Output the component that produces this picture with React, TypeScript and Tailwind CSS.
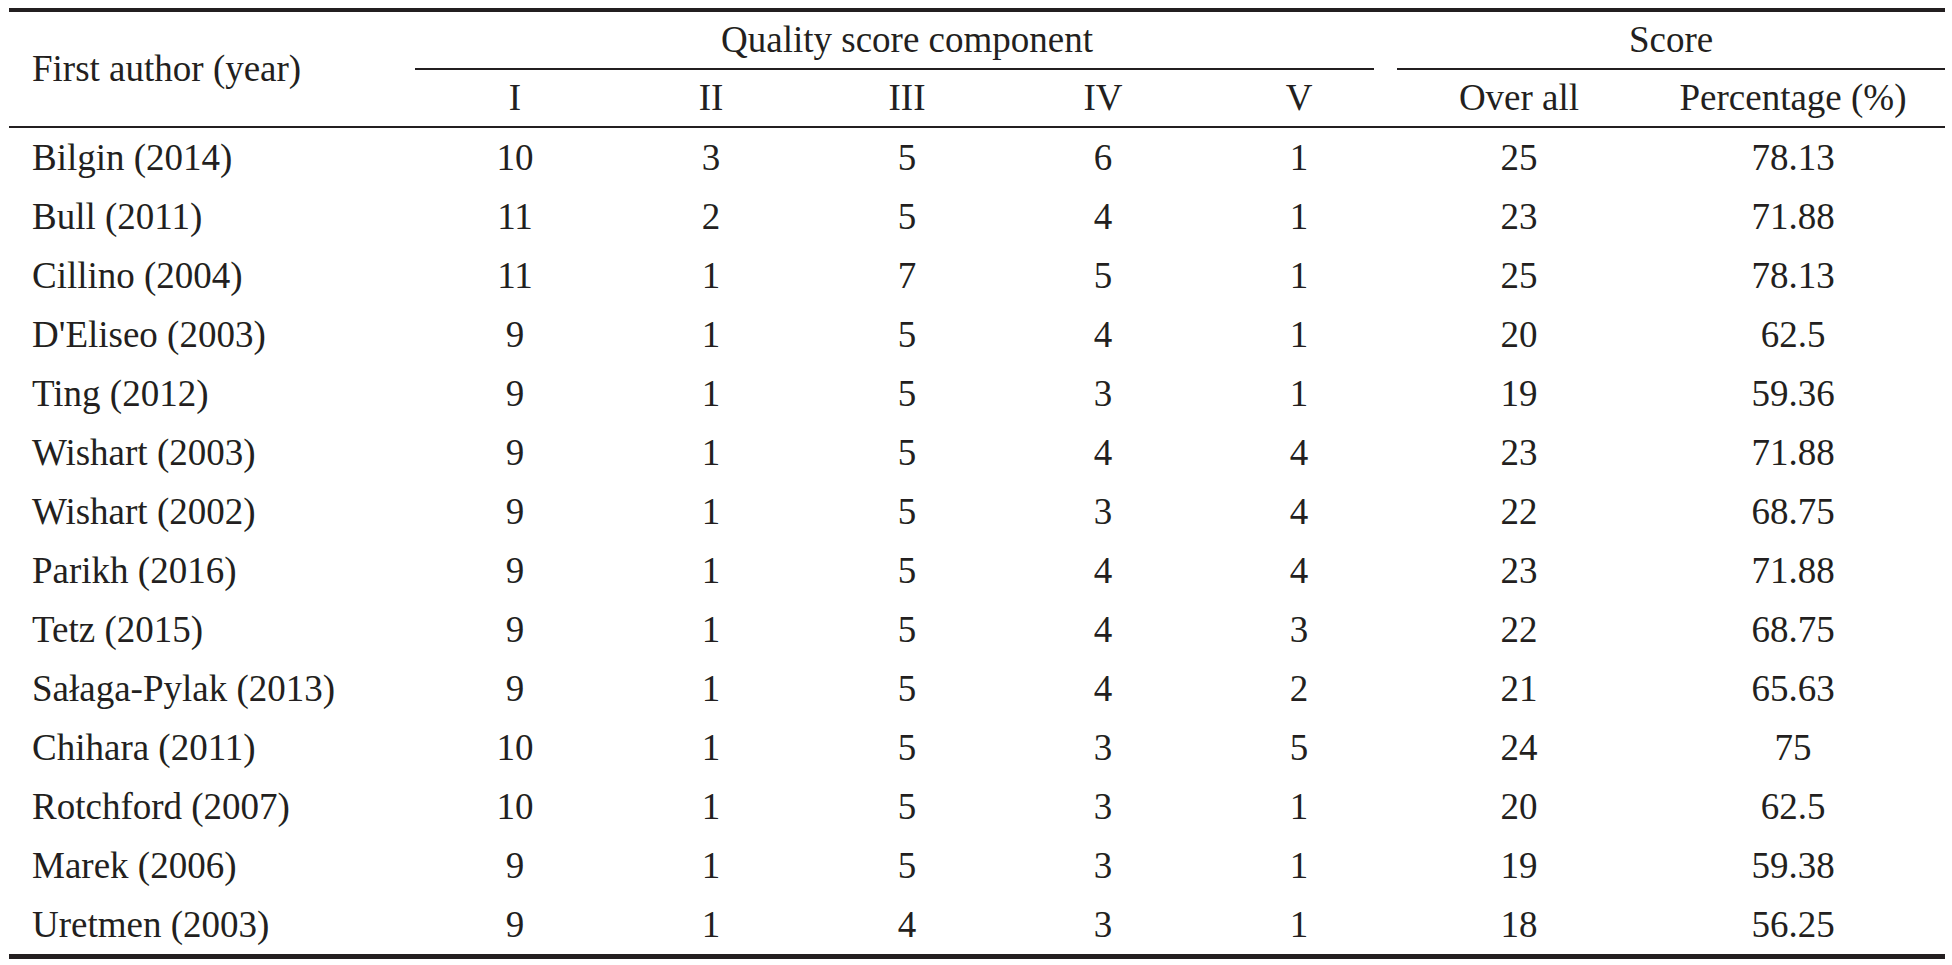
import React from "react";

const rows: [string, string, string, string, string, string, string, string][] = [
  ["Bilgin (2014)", "10", "3", "5", "6", "1", "25", "78.13"],
  ["Bull (2011)", "11", "2", "5", "4", "1", "23", "71.88"],
  ["Cillino (2004)", "11", "1", "7", "5", "1", "25", "78.13"],
  ["D'Eliseo (2003)", "9", "1", "5", "4", "1", "20", "62.5"],
  ["Ting (2012)", "9", "1", "5", "3", "1", "19", "59.36"],
  ["Wishart (2003)", "9", "1", "5", "4", "4", "23", "71.88"],
  ["Wishart (2002)", "9", "1", "5", "3", "4", "22", "68.75"],
  ["Parikh (2016)", "9", "1", "5", "4", "4", "23", "71.88"],
  ["Tetz (2015)", "9", "1", "5", "4", "3", "22", "68.75"],
  ["Sałaga-Pylak (2013)", "9", "1", "5", "4", "2", "21", "65.63"],
  ["Chihara (2011)", "10", "1", "5", "3", "5", "24", "75"],
  ["Rotchford (2007)", "10", "1", "5", "3", "1", "20", "62.5"],
  ["Marek (2006)", "9", "1", "5", "3", "1", "19", "59.38"],
  ["Uretmen (2003)", "9", "1", "4", "3", "1", "18", "56.25"],
];

const cols = "grid grid-cols-[408px_196px_196px_196px_196px_196px_244px_304px]";

export default function App() {
  return (
    <div
      className="w-full h-[965px] bg-white overflow-hidden text-[#231f20] text-[37px]"
      style={{ fontFamily: '"Liberation Serif", "Times New Roman", serif' }}
    >
      <div className="pl-[9px] pt-[8px] w-[1945px]">
        <div className="h-[4px] bg-[#231f20]" />
        {/* Header */}
        <div className={`${cols} grid-rows-[56px_2px_56px]`}>
          <div className="row-span-3 flex items-center pl-[23px] whitespace-nowrap">
            First author (year)
          </div>
          <div className="col-span-5 text-center leading-[56px] whitespace-nowrap">
            Quality score component
          </div>
          <div className="col-span-2 text-center leading-[56px] whitespace-nowrap">
            Score
          </div>
          <div className="col-span-5 ml-[-2px] mr-[23px] bg-[#231f20]" />
          <div className="col-span-2 bg-[#231f20]" />
          {["I", "II", "III", "IV", "V", "Over all", "Percentage (%)"].map((h) => (
            <div key={h} className="text-center leading-[56px] whitespace-nowrap">
              {h}
            </div>
          ))}
        </div>
        <div className="h-[2px] bg-[#231f20]" />
        {/* Body */}
        <div className={`${cols} auto-rows-[59px]`}>
          {rows.map((r) =>
            r.map((c, i) => (
              <div
                key={r[0] + i}
                className={
                  i === 0
                    ? "pl-[23px] leading-[59px] whitespace-nowrap"
                    : "text-center leading-[59px] whitespace-nowrap"
                }
              >
                {c}
              </div>
            ))
          )}
        </div>
        <div className="h-[5px] bg-[#231f20]" />
      </div>
    </div>
  );
}
